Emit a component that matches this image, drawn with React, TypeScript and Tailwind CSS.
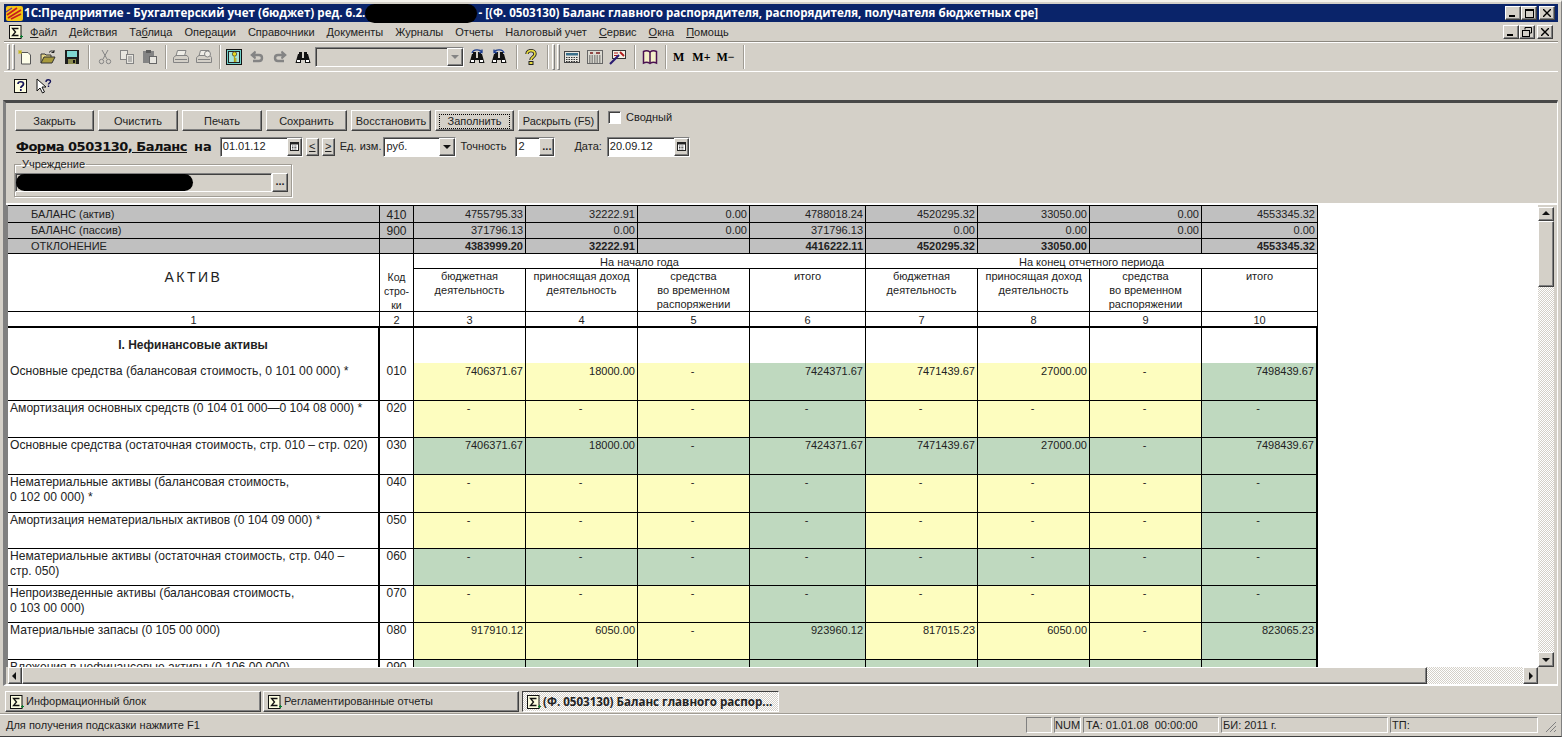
import type { ReactNode } from "react";

const FONT = "font-['Liberation_Sans',Arial,sans-serif]";
const RAISED =
  "bg-[#d4d0c8] border border-t-white border-l-white border-r-[#404040] border-b-[#404040] shadow-[inset_-1px_-1px_0_#808080]";
const SUNKEN =
  "border border-t-[#808080] border-l-[#808080] border-r-white border-b-white shadow-[inset_1px_1px_0_#404040]";
const PANE = "border border-t-[#808080] border-l-[#808080] border-r-white border-b-white";
const CHECKER =
  "bg-[repeating-conic-gradient(#ffffff_0%_25%,#d4d0c8_0%_50%)] bg-[length:2px_2px]";
const COLS =
  "grid grid-cols-[372px_34px_112px_112px_112px_116px_112px_112px_112px_116px]";

function Sigma({ className = "" }: { className?: string }) {
  return (
    <svg viewBox="0 0 16 16" className={`w-4 h-4 shrink-0 ${className}`}>
      <rect x="1.5" y="1.5" width="11.5" height="13" fill="#fdfde0" stroke="#111" />
      <path d="M10.5 4.5H4.5L7.5 8L4.5 11.5H10.5" fill="none" stroke="#111" strokeWidth="1.3" />
      <path d="M12 12.5h3M13.5 11v3" stroke="#0a7a30" strokeWidth="1" />
    </svg>
  );
}

function Logo() {
  return (
    <svg viewBox="0 0 17 17" className="w-[17px] h-[17px] shrink-0">
      <rect x="0" y="1" width="17" height="15" rx="2" fill="#f3c515" />
      <path d="M1 10L11 3M2 13L15 5M5 14L15 9" stroke="#c81e1e" strokeWidth="1.8" fill="none" />
      <path d="M0 7L6 3" stroke="#6b2f9a" strokeWidth="1.4" />
    </svg>
  );
}

function NewDoc() {
  return (
    <svg viewBox="0 0 16 16" className="w-4 h-4">
      <path d="M4.5 3.5H11L13.5 6V15H4.5Z" fill="#fdfde8" stroke="#555" />
      <path d="M1 3h4M3 1v4M1.5 1.5l3 3M4.5 1.5l-3 3" stroke="#c8b820" strokeWidth="1" />
    </svg>
  );
}
function OpenFolder() {
  return (
    <svg viewBox="0 0 16 16" className="w-4 h-4">
      <path d="M1 14V5h4l1 1h5v2" fill="#e5d78a" stroke="#333" />
      <path d="M1 14L4 8H15L12 14Z" fill="#a89a3c" stroke="#333" />
      <path d="M9 3.5C10.5 1.5 12.5 1.5 14 3M14 1v2.5h-2.5" fill="none" stroke="#222" />
    </svg>
  );
}
function Save() {
  return (
    <svg viewBox="0 0 16 16" className="w-4 h-4">
      <rect x="1" y="1" width="14" height="14" fill="#1d1d1d" />
      <rect x="3" y="2" width="10" height="6" fill="#7fd6d0" />
      <rect x="4" y="10" width="8" height="5" fill="#8a8a50" />
      <rect x="9" y="11" width="2" height="3" fill="#111" />
    </svg>
  );
}
function Cut() {
  return (
    <svg viewBox="0 0 16 16" className="w-4 h-4" fill="none" stroke="#848484">
      <path d="M5 1L10 10M11 1L6 10" />
      <circle cx="4.5" cy="12.5" r="2.2" />
      <circle cx="11.5" cy="12.5" r="2.2" />
    </svg>
  );
}
function Copy() {
  return (
    <svg viewBox="0 0 16 16" className="w-4 h-4" fill="#e8e6e0" stroke="#848484">
      <rect x="1.5" y="1.5" width="7" height="9" />
      <rect x="7.5" y="5.5" width="7" height="9" />
      <path d="M9 8h4M9 10h4M9 12h4" />
    </svg>
  );
}
function Paste() {
  return (
    <svg viewBox="0 0 16 16" className="w-4 h-4">
      <rect x="1" y="2" width="11" height="12" fill="#848484" />
      <rect x="4" y="1" width="5" height="3" fill="#5c5c5c" />
      <rect x="7.5" y="7.5" width="7" height="7" fill="#e8e6e0" stroke="#666" />
    </svg>
  );
}
function Printer({ preview = false }: { preview?: boolean }) {
  return (
    <svg viewBox="0 0 18 16" className="w-[18px] h-4" fill="#d4d0c8" stroke="#848484">
      <path d="M5.5 1.5H14L12.5 7H4Z" fill="#eeece6" />
      <path d="M1.5 8.5L4 6.5H15L16.5 8.5V13.5H1.5Z" />
      <path d="M3 10.5H15" />
      {preview && <circle cx="12.5" cy="5" r="3" fill="#eeece6" />}
    </svg>
  );
}
function KeyBook() {
  return (
    <svg viewBox="0 0 16 16" className="w-4 h-4">
      <rect x="0.5" y="0.5" width="15" height="15" fill="#6fd0c8" stroke="#111" />
      <rect x="2.5" y="2.5" width="11" height="11" fill="#a8e4dc" stroke="#222" />
      <circle cx="8.5" cy="5" r="2.2" fill="#e8d820" stroke="#333" strokeWidth="0.7" />
      <path d="M8.5 7v6M8.5 10h2M8.5 12h2" stroke="#b0a010" strokeWidth="1.3" />
    </svg>
  );
}
function Arrow({ flip = false }: { flip?: boolean }) {
  return (
    <svg viewBox="0 0 14 14" className={`w-[14px] h-[14px] ${flip ? "-scale-x-100" : ""}`} fill="none" stroke="#848484" strokeWidth="2.4">
      <path d="M3 5H9C13 5 13 11 9 11H3" />
      <path d="M5.5 1.5L1.5 5L5.5 8.5" strokeWidth="1.8" fill="#848484" />
    </svg>
  );
}
function Binoculars({ hook }: { hook?: "l" | "r" }) {
  return (
    <svg viewBox="0 0 16 16" className="w-4 h-4" fill="#111">
      <path d="M3 5H7V9H9V5H13L15.5 14H10V11H6V14H0.5Z" />
      <rect x="4" y="3" width="3" height="3" />
      <rect x="9" y="3" width="3" height="3" />
      <rect x="2" y="11" width="3" height="2" fill="#fff" />
      <rect x="11" y="11" width="3" height="2" fill="#fff" />
      {hook === "r" && <path d="M3 4C4 0 11 0 13 3M13 0.5V3.5H10" fill="none" stroke="#1f3f90" strokeWidth="1.3" />}
      {hook === "l" && <path d="M13 4C12 0 5 0 3 3M3 0.5V3.5H6" fill="none" stroke="#1f3f90" strokeWidth="1.3" />}
    </svg>
  );
}
function Question() {
  return (
    <svg viewBox="0 0 14 16" className="w-[14px] h-4" fill="none">
      <path d="M3 5C3 0.5 11 0.5 11 5C11 8 7 8 7 11" stroke="#222" strokeWidth="3.4" />
      <path d="M3 5C3 0.5 11 0.5 11 5C11 8 7 8 7 11" stroke="#e8dc40" strokeWidth="1.6" />
      <rect x="5" y="12.5" width="4" height="3" fill="#e8dc40" stroke="#222" />
    </svg>
  );
}
function Calculator() {
  return (
    <svg viewBox="0 0 16 16" className="w-4 h-4">
      <rect x="0.5" y="2.5" width="15" height="11" fill="#e8e6e0" stroke="#444" />
      <rect x="2" y="4" width="12" height="2.5" fill="#3a6f8a" />
      <path d="M2 8.5h12M2 10.5h12M2 12.5h12" stroke="#333" strokeDasharray="1.5 1" />
    </svg>
  );
}
function Table() {
  return (
    <svg viewBox="0 0 16 16" className="w-4 h-4">
      <rect x="0.5" y="1.5" width="15" height="13" fill="#dcdad2" stroke="#666" />
      <path d="M3 4h3M9 4h4" stroke="#7a1a1a" strokeWidth="1.4" />
      <path d="M2 7h12M2 9h12M2 11h12M2 13h12" stroke="#444" strokeDasharray="1.5 1" />
    </svg>
  );
}
function Tools() {
  return (
    <svg viewBox="0 0 18 16" className="w-[18px] h-4">
      <rect x="3.5" y="1.5" width="13" height="8" fill="#f2f0e6" stroke="#333" />
      <path d="M5 4h4M5 6.5h3" stroke="#b01818" />
      <path d="M1 15L10 6" stroke="#2a1a70" strokeWidth="2.2" />
      <path d="M11 3l4 4" stroke="#b01818" strokeWidth="1.8" />
    </svg>
  );
}
function Book() {
  return (
    <svg viewBox="0 0 16 16" className="w-4 h-4">
      <path d="M8 3C6 1.5 3.5 1.5 1.5 2.5V14C3.5 13 6 13 8 14.5C10 13 12.5 13 14.5 14V2.5C12.5 1.5 10 1.5 8 3Z" fill="#f4f0c8" stroke="#4a1050" strokeWidth="1.5" />
      <path d="M8 3V14" stroke="#4a1050" strokeWidth="1.5" />
    </svg>
  );
}
function CalendarIcon() {
  return (
    <svg viewBox="0 0 9 9" className="w-[9px] h-[9px]">
      <rect x="0.5" y="0.5" width="8" height="8" fill="#fff" stroke="#222" />
      <rect x="1" y="1" width="7" height="1.5" fill="#222" />
      <path d="M2 4h5M2 5.5h5M2 7h5" stroke="#222" strokeWidth="0.8" strokeDasharray="1 0.6" />
    </svg>
  );
}

function Triangle({ dir }: { dir: "up" | "down" | "left" | "right" }) {
  const d = { up: "M4 1L8 5H0Z", down: "M0 2H8L4 6Z", left: "M5 0V8L1 4Z", right: "M2 0V8L6 4Z" }[dir];
  return (
    <svg viewBox="0 0 8 8" className="w-2 h-2" fill="#111">
      <path d={d} />
    </svg>
  );
}

function Sep({ className = "" }: { className?: string }) {
  return <div className={`w-[2px] h-[24px] bg-[#a09c94] border-r border-white ${className}`} />;
}

function Grip({ className = "" }: { className?: string }) {
  return (
    <div className={`flex gap-[2px] h-[26px] shrink-0 ${className}`}>
      <div className="w-[3px] border border-t-white border-l-white border-r-[#808080] border-b-[#808080]" />
      <div className="w-[3px] border border-t-white border-l-white border-r-[#808080] border-b-[#808080]" />
    </div>
  );
}

function CaptionBtn({ children, className = "" }: { children: ReactNode; className?: string }) {
  return <div className={`w-[16px] h-[14px] flex items-center justify-center ${RAISED} ${className}`}>{children}</div>;
}

const MinGlyph = <div className="w-[6px] h-[2px] bg-black mt-[6px] -ml-[2px]" />;
const CloseGlyph = (
  <svg viewBox="0 0 8 8" className="w-2 h-2" stroke="#000" strokeWidth="1.4">
    <path d="M0 0L8 8M8 0L0 8" />
  </svg>
);

const MENU: ReactNode[] = [
  <><u>Ф</u>айл</>,
  <><u>Д</u>ействия</>,
  <>Та<u>б</u>лица</>,
  <>Опе<u>р</u>ации</>,
  "Справочники",
  "Документы",
  "Журналы",
  "Отчеты",
  "Налоговый учет",
  <><u>С</u>ервис</>,
  <><u>О</u>кна</>,
  <><u>П</u>омощь</>,
];

const BUTTONS = [
  { text: "Закрыть", w: "w-[79px]" },
  { text: "Очистить", w: "w-[80px]" },
  { text: "Печать", w: "w-[80px]" },
  { text: "Сохранить", w: "w-[81px]" },
  { text: "Восстановить", w: "w-[80px]" },
  { text: "Заполнить", w: "w-[79px]", focus: true },
  { text: "Раскрыть (F5)", w: "w-[81px]" },
];

const SUMMARY = [
  { label: "БАЛАНС (актив)", code: "410", v: ["4755795.33", "32222.91", "0.00", "4788018.24", "4520295.32", "33050.00", "0.00", "4553345.32"] },
  { label: "БАЛАНС (пассив)", code: "900", v: ["371796.13", "0.00", "0.00", "371796.13", "0.00", "0.00", "0.00", "0.00"] },
  { label: "ОТКЛОНЕНИЕ", code: "", bold: true, v: ["4383999.20", "32222.91", "", "4416222.11", "4520295.32", "33050.00", "", "4553345.32"] },
];

const SUBHEAD = [
  "бюджетная\nдеятельность",
  "приносящая доход\nдеятельность",
  "средства\nво временном\nраспоряжении",
  "итого",
  "бюджетная\nдеятельность",
  "приносящая доход\nдеятельность",
  "средства\nво временном\nраспоряжении",
  "итого",
];

const YELLOW = "bg-[#fdfdbf]";
const GREEN = "bg-[#bfd9bf]";
const MIXED = [YELLOW, YELLOW, YELLOW, GREEN, YELLOW, YELLOW, YELLOW, GREEN];
const ALLGREEN = [GREEN, GREEN, GREEN, GREEN, GREEN, GREEN, GREEN, GREEN];
const DASHES = ["-", "-", "-", "-", "-", "-", "-", "-"];

const ROWS = [
  { label: "Амортизация основных средств (0 104 01 000—0 104 08 000) *", code: "020", h: "h-[37px]", c: MIXED, v: DASHES },
  { label: "Основные средства (остаточная стоимость, стр. 010 – стр. 020)", code: "030", h: "h-[37px]", c: ALLGREEN, v: ["7406371.67", "18000.00", "-", "7424371.67", "7471439.67", "27000.00", "-", "7498439.67"] },
  { label: "Нематериальные активы (балансовая стоимость,\n0 102 00 000) *", code: "040", h: "h-[38px]", c: MIXED, v: DASHES },
  { label: "Амортизация нематериальных активов (0 104 09 000) *", code: "050", h: "h-[36px]", c: MIXED, v: DASHES },
  { label: "Нематериальные активы (остаточная стоимость, стр. 040 –\nстр. 050)", code: "060", h: "h-[37px]", c: ALLGREEN, v: DASHES },
  { label: "Непроизведенные активы (балансовая стоимость,\n0 103 00 000)", code: "070", h: "h-[37px]", c: MIXED, v: DASHES },
  { label: "Материальные запасы (0 105 00 000)", code: "080", h: "h-[37px]", c: MIXED, v: ["917910.12", "6050.00", "-", "923960.12", "817015.23", "6050.00", "-", "823065.23"] },
  { label: "Вложения в нефинансовые активы (0 106 00 000)", code: "090", h: "h-[37px]", c: ALLGREEN, v: DASHES },
];

function ValueCell({ value, className }: { value: string; className: string }) {
  const dash = value === "-";
  return (
    <div className={`border-r border-b border-black pr-[2px] ${dash ? "text-center" : "text-right"} ${className}`}>{value}</div>
  );
}

function ReportTable() {
  return (
    <div className={`w-[1310px] text-[11px] leading-[13px] text-[#222] ${FONT}`}>
      <div className="border-t border-black">
        {SUMMARY.map((r) => (
          <div key={r.label} className={`${COLS} h-[16px] bg-[#c0c0c0] ${r.bold ? "font-bold" : ""}`}>
            <div className="border-r border-b border-black pl-[23px] pt-[2px] font-normal">{r.label}</div>
            <div className="border-r border-b border-black text-center text-[12px] pt-[3px] font-normal">{r.code}</div>
            {r.v.map((v, i) => (
              <div key={i} className="border-r border-b border-black text-right pr-[2px] pt-[2px]">{v}</div>
            ))}
          </div>
        ))}
      </div>
      <div className={`${COLS} grid-rows-[15px_43px_16px]`}>
        <div className="row-span-2 border-r border-b border-black text-center text-[14px] leading-[16px] tracking-[2.5px] pt-[15px]">АКТИВ</div>
        <div className="row-span-2 border-r border-b border-black text-center leading-[14px] pt-[16px] text-[10.5px]">Код<br />стро-<br />ки</div>
        <div className="col-span-4 border-r border-b border-black text-center pt-[2px]">На начало года</div>
        <div className="col-span-4 border-r border-b border-black text-center pt-[2px]">На конец отчетного периода</div>
        {SUBHEAD.map((s, i) => (
          <div key={i} className="border-r border-b border-black text-center leading-[14px] whitespace-pre-line">{s}</div>
        ))}
        {["1", "2", "3", "4", "5", "6", "7", "8", "9", "10"].map((n) => (
          <div key={n} className="border-r border-b-2 border-black text-center pt-[2px]">{n}</div>
        ))}
      </div>
      <div className={`${COLS} h-[35px]`}>
        <div className="border-r-2 border-black text-center font-bold text-[12px] pt-[11px]">I. Нефинансовые активы</div>
        <div className="border-r border-black" />
        {DASHES.map((_, i) => (
          <div key={i} className={`border-black ${i === 7 ? "border-r-2" : "border-r"}`} />
        ))}
      </div>
      <div className={`${COLS} h-[38px]`}>
        <div className="border-r-2 border-b border-black text-[12.2px] pl-[2px] pt-[2px]">Основные средства (балансовая стоимость, 0 101 00 000) *</div>
        <div className="border-r border-b border-black text-center text-[12px] pt-[2px]">010</div>
        {["7406371.67", "18000.00", "-", "7424371.67", "7471439.67", "27000.00", "-", "7498439.67"].map((v, i) => (
          <ValueCell key={i} value={v} className={`pt-[2px] ${MIXED[i]} ${i === 7 ? "border-r-2" : ""}`} />
        ))}
      </div>
      {ROWS.map((r) => (
        <div key={r.code} className={`${COLS} ${r.h}`}>
          <div className="border-r-2 border-b border-black text-[12.1px] leading-[15px] pl-[2px] whitespace-pre-line">{r.label}</div>
          <div className="border-r border-b border-black text-center text-[12px] pt-[1px]">{r.code}</div>
          {r.v.map((v, i) => (
            <ValueCell key={i} value={v} className={`pt-[1px] ${r.c[i]} ${i === 7 ? "border-r-2" : ""}`} />
          ))}
        </div>
      ))}
    </div>
  );
}

function Field({ w, text, dots, calendar }: { w: string; text: string; dots?: boolean; calendar?: boolean }) {
  return (
    <div className={`flex h-[20px] bg-white ${SUNKEN} ${w}`}>
      <div className="flex-1 pl-[2px] leading-[17px] whitespace-nowrap overflow-hidden">{text}</div>
      {calendar && (
        <div className={`w-[15px] flex items-center justify-center ${RAISED}`}>
          <CalendarIcon />
        </div>
      )}
      {dots && <div className={`w-[15px] text-center font-bold leading-[14px] ${RAISED}`}>...</div>}
    </div>
  );
}

function SmallNav({ children, className = "" }: { children: ReactNode; className?: string }) {
  return <div className={`w-[13px] h-[18px] text-center underline leading-[15px] ${RAISED} ${className}`}>{children}</div>;
}

function FormPanel() {
  return (
    <div className={`h-[102px] shrink-0 border-b-2 border-white pl-[9px] text-[11px] text-[#222] ${FONT}`}>
      <div className="flex items-start gap-[4px] pt-[7px] h-[31px]">
        {BUTTONS.map((b) => (
          <div key={b.text} className={`h-[21px] flex items-center justify-center whitespace-nowrap pt-[1px] ${RAISED} ${b.w}`}>
            <span className={b.focus ? "outline-1 outline-dotted outline-black outline-offset-0 w-[69px] text-center leading-[13px]" : ""}>{b.text}</span>
          </div>
        ))}
        <div className={`w-[13px] h-[13px] bg-white ml-[5px] mt-[1px] ${SUNKEN}`} />
        <span className="ml-[1px] leading-[14px]">Сводный</span>
      </div>
      <div className="flex items-center h-[23px] mt-[1px]">
        <span className="ml-[1px] font-['DejaVu_Sans',sans-serif] font-bold text-[13px] underline tracking-[-0.5px] whitespace-nowrap text-[#111]">Форма 0503130, Баланс</span>
        <span className="ml-[7px] font-['DejaVu_Sans',sans-serif] font-bold text-[13px] text-[#111]">на</span>
        <div className="ml-[8px]"><Field w="w-[83px]" text="01.01.12" calendar /></div>
        <SmallNav className="ml-[3px]">&lt;</SmallNav>
        <SmallNav className="ml-[3px]">&gt;</SmallNav>
        <span className="ml-[5px] whitespace-nowrap">Ед. изм.</span>
        <div className={`ml-[2px] flex h-[20px] w-[73px] bg-white ${SUNKEN}`}>
          <div className="flex-1 pl-[2px] leading-[17px]">руб.</div>
          <div className={`w-[16px] flex items-center justify-center ${RAISED}`}><Triangle dir="down" /></div>
        </div>
        <span className="ml-[4px]">Точность</span>
        <div className="ml-[9px]"><Field w="w-[40px]" text="2" dots /></div>
        <span className="ml-[19px]">Дата:</span>
        <div className="ml-[5px]"><Field w="w-[83px]" text="20.09.12" calendar /></div>
      </div>
      <fieldset className="-ml-[1px] w-[278px] h-[38px] border border-[#a09c94] shadow-[1px_1px_0_#fff,inset_1px_1px_0_#fff] mt-[1px] block">
        <legend className="ml-[6px] px-[1px] leading-[11px] text-[11px]">Учреждение</legend>
        <div className="flex mt-[3px]">
          <div className={`w-[257px] h-[19px] bg-[#d4d0c8] ${SUNKEN}`}>
            <div className="w-[177px] h-[17px] bg-black rounded-[9px]" />
          </div>
          <div className={`w-[16px] h-[19px] text-center font-bold leading-[14px] ${RAISED}`}>...</div>
        </div>
      </fieldset>
    </div>
  );
}

function Tab({ text, w, active }: { text: string; w: string; active?: boolean }) {
  return (
    <div
      className={`h-[21px] flex items-center gap-[1px] pl-[3px] whitespace-nowrap ${w} ${
        active
          ? `${CHECKER} border border-t-[#404040] border-l-[#404040] border-r-white border-b-white font-['Open_Sans',sans-serif] font-bold text-[11.6px]`
          : RAISED
      }`}
    >
      <Sigma />
      <span>{text}</span>
    </div>
  );
}

export default function App() {
  return (
    <div className={`w-[1562px] h-[737px] bg-[#d4d0c8] overflow-hidden flex flex-col border-t-[2px] border-t-[#f4f2ec] border-r border-r-[#808080] border-b border-b-[#404040] ${FONT} text-[11px] text-[#222]`}>
      <div className="mt-[2px] ml-[4px] mr-[3px] h-[18px] shrink-0 bg-[#0a246a] text-white font-['Open_Sans',sans-serif] font-bold text-[11.6px] flex items-center pl-[2px] pr-[3px] whitespace-nowrap">
        <Logo />
        <span className="ml-[1px]">1С:Предприятие - Бухгалтерский учет (бюджет) ред. 6.2.</span>
        <div className="w-[112px] h-[19px] bg-black rounded-[10px] shrink-0" />
        <span className="ml-[1px]">- [(Ф. 0503130) Баланс главного распорядителя, распорядителя, получателя бюджетных сре]</span>
        <div className="ml-auto flex">
          <CaptionBtn>{MinGlyph}</CaptionBtn>
          <CaptionBtn>
            <div className="w-[9px] h-[9px] border border-black border-t-2" />
          </CaptionBtn>
          <CaptionBtn className="ml-[2px]">{CloseGlyph}</CaptionBtn>
        </div>
      </div>

      <div className="h-[20px] shrink-0 ml-[4px] mr-[3px] border-b border-[#8c8880] shadow-[0_1px_0_#fff] flex items-center pl-[4px] pr-[5px]">
        <Sigma />
        <div className="ml-[6px] flex gap-[12px] pt-[1px]">
          {MENU.map((m, i) => (
            <span key={i} className="whitespace-nowrap">{m}</span>
          ))}
        </div>
        <div className="ml-auto flex">
          <CaptionBtn>{MinGlyph}</CaptionBtn>
          <CaptionBtn>
            <svg viewBox="0 0 10 10" className="w-[10px] h-[10px]" fill="none" stroke="#000">
              <path d="M3 2.5V0.5H9.5V6H7.5" strokeWidth="1" />
              <rect x="0.5" y="3.5" width="7" height="6" />
            </svg>
          </CaptionBtn>
          <CaptionBtn className="ml-[2px]">{CloseGlyph}</CaptionBtn>
        </div>
      </div>

      <div className="h-[29px] shrink-0 ml-[4px] mr-[3px] mt-[1px] border-b border-white flex items-center">
        <Grip className="ml-[3px]" />
        <div className="ml-[2px]"><NewDoc /></div>
        <div className="ml-[7px]"><OpenFolder /></div>
        <div className="ml-[8px]"><Save /></div>
        <Sep className="ml-[8px]" />
        <div className="ml-[7px]"><Cut /></div>
        <div className="ml-[6px]"><Copy /></div>
        <div className="ml-[7px]"><Paste /></div>
        <Sep className="ml-[7px]" />
        <div className="ml-[5px]"><Printer /></div>
        <div className="ml-[5px]"><Printer preview /></div>
        <Sep className="ml-[6px]" />
        <div className="ml-[5px]"><KeyBook /></div>
        <div className="ml-[8px]"><Arrow /></div>
        <div className="ml-[9px]"><Arrow flip /></div>
        <div className="ml-[8px]"><Binoculars /></div>
        <div className={`ml-[4px] w-[149px] h-[20px] flex justify-end ${SUNKEN}`}>
          <div className={`w-[16px] flex items-center justify-center ${RAISED}`}>
            <svg viewBox="0 0 8 8" className="w-2 h-2" fill="#848484"><path d="M0 2H8L4 6Z" /></svg>
          </div>
        </div>
        <div className="ml-[5px]"><Binoculars hook="r" /></div>
        <div className="ml-[6px]"><Binoculars hook="l" /></div>
        <Sep className="ml-[9px]" />
        <div className="ml-[6px]"><Question /></div>
        <Sep className="ml-[9px]" />
        <Grip className="ml-[3px]" />
        <div className="ml-[4px]"><Calculator /></div>
        <div className="ml-[7px]"><Table /></div>
        <div className="ml-[6px]"><Tools /></div>
        <Sep className="ml-[7px]" />
        <div className="ml-[6px]"><Book /></div>
        <Sep className="ml-[7px]" />
        <div className="ml-[6px] flex gap-[8px] font-['Liberation_Serif',serif] font-bold text-[12px] text-black">
          <span>M</span>
          <span>M+</span>
          <span className="-ml-[2px]">M−</span>
        </div>
        <Sep className="ml-[8px]" />
      </div>

      <div className="h-[28px] shrink-0 flex items-center pl-[14px] gap-[8px]">
        <svg viewBox="0 0 14 14" className="w-[14px] h-[14px]">
          <rect x="0.5" y="0.5" width="12" height="13" fill="#fdfde0" stroke="#111" />
          <path d="M4 5C4 2 9.5 2 9.5 5C9.5 7 6.8 7 6.8 9M6.8 10v2" fill="none" stroke="#14145a" strokeWidth="1.7" />
        </svg>
        <svg viewBox="0 0 16 16" className="w-4 h-4">
          <path d="M1 1V13L4 10L6.5 15L8.5 14L6 9H10Z" fill="#fff" stroke="#111" />
          <path d="M10 4C10 1 14.5 1 14.5 3.5C14.5 5 12.5 5 12.5 6.5M12.5 7.5v1.5" fill="none" stroke="#14145a" strokeWidth="1.4" />
        </svg>
      </div>

      <div className="h-[586px] shrink-0 ml-[3px] mr-[3px] flex flex-col border-t-[3px] border-l-[3px] border-r border-b-[2px] border-t-[#484848] border-l-[#808080] border-r-white border-b-white">
        <FormPanel />
        <div className="flex-1 min-h-0 flex">
          <div className="w-[1532px] shrink-0 flex flex-col">
            <div className="flex-1 min-h-0 bg-white overflow-hidden border-l-[2px] border-[#808080]">
              <ReportTable />
            </div>
            <div className="h-[17px] shrink-0 flex pl-[2px]">
              <div className={`w-[14px] flex items-center justify-center ${RAISED}`}><Triangle dir="left" /></div>
              <div className={`w-[1405px] ${RAISED}`} />
              <div className={`flex-1 ${CHECKER}`} />
              <div className={`w-[15px] flex items-center justify-center ${RAISED}`}><Triangle dir="right" /></div>
            </div>
          </div>
          <div className="w-[16px] shrink-0 flex flex-col pt-[2px] pb-[17px]">
            <div className={`h-[14px] flex items-center justify-center ${RAISED}`}><Triangle dir="up" /></div>
            <div className={`h-[66px] ${RAISED}`} />
            <div className={`flex-1 ${CHECKER}`} />
            <div className={`h-[15px] flex items-center justify-center ${RAISED}`}><Triangle dir="down" /></div>
          </div>
        </div>
      </div>

      <div className="h-[27px] shrink-0 flex items-start pt-[5px] pl-[5px] gap-[2px]">
        <Tab text="Информационный блок" w="w-[256px]" />
        <Tab text="Регламентированные отчеты" w="w-[256px]" />
        <Tab text="(Ф. 0503130) Баланс главного распор..." w="w-[257px] ml-[1px]" active />
      </div>

      <div className="flex-1 min-h-0 flex items-start border-t border-[#a09c94] pt-[3px] pl-[6px] pr-[4px] shadow-[inset_0_1px_0_#fff]">
        <span className="leading-[16px] flex-1">Для получения подсказки нажмите F1</span>
        <div className={`w-[26px] h-[16px] ${PANE}`} />
        <div className={`ml-[2px] w-[27px] h-[16px] leading-[14px] ${PANE}`}>NUM</div>
        <div className={`ml-[2px] w-[136px] h-[16px] leading-[14px] pl-[2px] whitespace-pre ${PANE}`}>ТА: 01.01.08  00:00:00</div>
        <div className={`ml-[2px] w-[167px] h-[16px] leading-[14px] pl-[1px] ${PANE}`}>БИ: 2011 г.</div>
        <div className={`ml-[2px] w-[148px] h-[16px] leading-[14px] pl-[1px] ${PANE}`}>ТП:</div>
        <svg viewBox="0 0 14 14" className="w-[14px] h-[14px] mt-[2px] ml-[5px]" stroke="#808080">
          <path d="M13 3L3 13M13 7L7 13M13 11L11 13" />
        </svg>
      </div>
    </div>
  );
}
